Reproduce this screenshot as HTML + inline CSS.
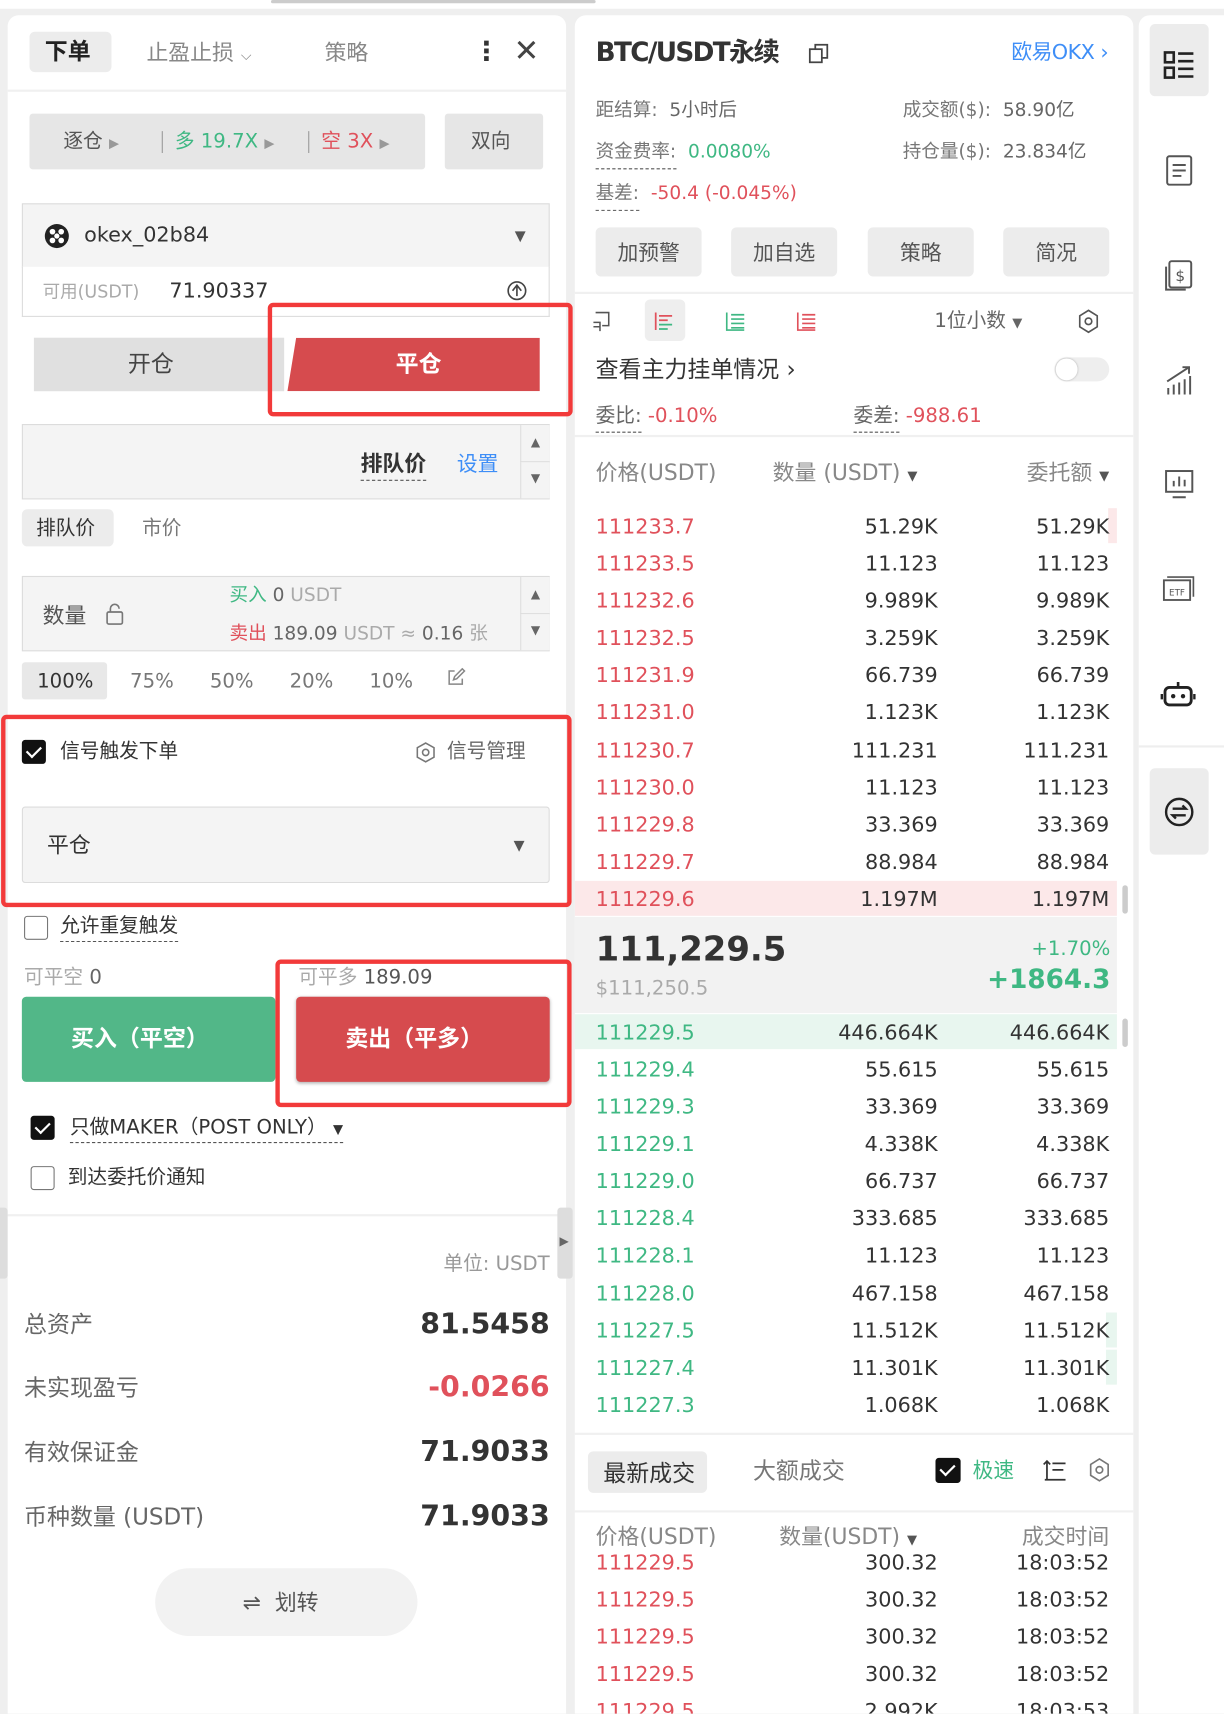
<!DOCTYPE html>
<html><head><meta charset="utf-8">
<style>
*{margin:0;padding:0;box-sizing:border-box}
html,body{width:1224px;height:1714px;overflow:hidden;background:#efefef}
body{font-family:"DejaVu Sans","Noto Sans CJK SC",sans-serif;color:#333}
#w{position:absolute;left:0;top:0;width:1120px;height:1568px;transform:scale(1.09286);transform-origin:0 0}
.a{position:absolute}
.t{position:absolute;white-space:nowrap;line-height:1}
.r{text-align:right}
.g{color:#999}.red{color:#e0515b}.grn{color:#3fb883}
.box{position:absolute;background:#f4f4f4;border:1px solid #dcdcdc}
.hl{position:absolute;border:4px solid #f23a3a;border-radius:5px}
.cb{position:absolute;width:22px;height:22px;border:1.5px solid #777;border-radius:3px;background:#fff}
.cb.on{background:#111;border-color:#111}
.cb.on::after{content:"";position:absolute;left:6px;top:2px;width:6px;height:11px;border:solid #fff;border-width:0 2px 2px 0;transform:rotate(45deg)}
.dot{border-bottom:1.5px dashed #555;padding-bottom:3px}
.btn{position:absolute;background:#ececec;border-radius:5px;display:flex;align-items:center;justify-content:center;font-size:19px;color:#555}
.row{position:absolute;left:545px;width:470px;height:34px;font-size:19px}
.row span{position:absolute;top:8px;line-height:1}
.row .p{left:0}.row .q{right:157px}.row .v{right:0}
.sp{position:absolute;width:27px;background:#f4f4f4;border-left:1px solid #ddd;color:#666;font-size:11px;text-align:center}
</style></head><body>
<div id="w">
<div class="a" style="left:0;top:0;width:1120px;height:8px;background:#fff"></div>
<div class="a" style="left:248px;top:0;width:297px;height:3px;background:#ccc;border-radius:2px"></div>

<!-- LEFT PANEL -->
<div class="a" style="left:7px;top:14px;width:511px;height:1554px;background:#fff;border-radius:10px 10px 0 0"></div>
<div class="a" style="left:27px;top:29px;width:75px;height:37px;background:#ececec;border-radius:5px"></div>
<div class="t" style="left:41px;top:37px;font-size:21px;font-weight:bold;color:#222">下单</div>
<div class="t g" style="left:134px;top:38px;font-size:20px;color:#888">止盈止损 <span style="font-size:13px">⌵</span></div>
<div class="t" style="left:297px;top:38px;font-size:20px;color:#888">策略</div>
<div class="t" style="left:433px;top:35px;font-size:24px;font-weight:bold">⋮</div>
<div class="t" style="left:470px;top:33px;font-size:28px;color:#444">✕</div>
<div class="a" style="left:7px;top:82px;width:511px;height:2px;background:#f0f0f0"></div>

<div class="a" style="left:27px;top:104px;width:362px;height:51px;background:#e6e6e6;border-radius:3px"></div>
<div class="t" style="left:58px;top:121px;font-size:18px;color:#555">逐仓 <span style="font-size:12px;color:#999">▶</span></div>
<div class="a" style="left:148px;top:120px;width:1px;height:20px;background:#999"></div>
<div class="t grn" style="left:160px;top:121px;font-size:18px">多 19.7X <span style="font-size:12px;color:#999">▶</span></div>
<div class="a" style="left:282px;top:120px;width:1px;height:20px;background:#999"></div>
<div class="t red" style="left:294px;top:121px;font-size:18px">空 3X <span style="font-size:12px;color:#999">▶</span></div>
<div class="a" style="left:407px;top:104px;width:90px;height:51px;background:#e6e6e6;border-radius:3px"></div>
<div class="t" style="left:431px;top:121px;font-size:18px;color:#555">双向</div>

<div class="box" style="left:20px;top:186px;width:483px;height:59px"></div>
<svg class="a" style="left:40px;top:204px" width="24" height="24" viewBox="0 0 24 24"><circle cx="12" cy="12" r="11" fill="#222"/><circle cx="8" cy="8" r="2.6" fill="#fff"/><circle cx="16" cy="8" r="2.6" fill="#fff"/><circle cx="8" cy="16" r="2.6" fill="#fff"/><circle cx="16" cy="16" r="2.6" fill="#fff"/><circle cx="12" cy="12" r="2.4" fill="#fff"/></svg>
<div class="t" style="left:77px;top:206px;font-size:19px">okex_02b84</div>
<div class="t" style="left:471px;top:210px;font-size:13px;color:#555">▼</div>
<div class="a" style="left:20px;top:244px;width:483px;height:46px;border:1px solid #dcdcdc;border-top:none;background:#fff"></div>
<div class="t g" style="left:39px;top:259px;font-size:16px;color:#aaa">可用(USDT)</div>
<div class="t" style="left:155px;top:257px;font-size:19px">71.90337</div>
<svg class="a" style="left:463px;top:256px" width="20" height="20" viewBox="0 0 20 20"><circle cx="10" cy="10" r="8" fill="none" stroke="#444" stroke-width="1.5"/><path d="M10 5v10M6 10l4-5 4 5" fill="none" stroke="#444" stroke-width="1.5"/></svg>

<div class="a" style="left:31px;top:309px;width:229px;height:49px;background:#e0e0e0"></div>
<div class="t" style="left:117px;top:323px;font-size:21px;color:#444">开仓</div>
<div class="a" style="left:263px;top:309px;width:231px;height:49px;background:#d64b4e;clip-path:polygon(8px 0,100% 0,100% 100%,0 100%)"></div>
<div class="t" style="left:362px;top:323px;font-size:21px;color:#fff;font-weight:bold">平仓</div>
<div class="hl" style="left:245px;top:277px;width:279px;height:104px"></div>

<div class="box" style="left:20px;top:388px;width:483px;height:69px"></div>
<div class="t" style="left:330px;top:414px;font-size:20px;font-weight:bold"><span class="dot">排队价</span></div>
<div class="t" style="left:418px;top:416px;font-size:19px;color:#3e8ef7">设置</div>
<div class="sp" style="left:476px;top:389px;height:34px;line-height:32px;border-bottom:1px solid #ddd">▲</div>
<div class="sp" style="left:476px;top:423px;height:33px;line-height:30px">▼</div>

<div class="a" style="left:20px;top:466px;width:84px;height:34px;background:#ececec;border-radius:5px"></div>
<div class="t" style="left:33px;top:475px;font-size:18px">排队价</div>
<div class="t" style="left:130px;top:475px;font-size:18px;color:#777">市价</div>

<div class="box" style="left:20px;top:527px;width:483px;height:69px"></div>
<div class="t" style="left:39px;top:553px;font-size:20px;color:#555">数量</div>
<svg class="a" style="left:95px;top:551px" width="20" height="22" viewBox="0 0 20 22"><rect x="3" y="9" width="14" height="11" rx="1.5" fill="none" stroke="#777" stroke-width="1.5"/><path d="M6 9V6a4 4 0 0 1 8 0" fill="none" stroke="#777" stroke-width="1.5"/></svg>
<div class="t" style="left:210px;top:537px;font-size:17px;color:#aaa"><span class="grn">买入</span> <span style="color:#666">0</span> USDT</div>
<div class="t" style="left:210px;top:572px;font-size:17px;color:#aaa"><span class="red">卖出</span> <span style="color:#666">189.09</span> USDT ≈ <span style="color:#666">0.16</span> 张</div>
<div class="sp" style="left:476px;top:528px;height:34px;line-height:32px;border-bottom:1px solid #ddd">▲</div>
<div class="sp" style="left:476px;top:562px;height:33px;line-height:30px">▼</div>

<div class="a" style="left:20px;top:606px;width:78px;height:34px;background:#e8e8e8;border-radius:3px"></div>
<div class="t" style="left:34px;top:615px;font-size:18px">100%</div>
<div class="t" style="left:119px;top:615px;font-size:18px;color:#777">75%</div>
<div class="t" style="left:192px;top:615px;font-size:18px;color:#777">50%</div>
<div class="t" style="left:265px;top:615px;font-size:18px;color:#777">20%</div>
<div class="t" style="left:338px;top:615px;font-size:18px;color:#777">10%</div>
<svg class="a" style="left:408px;top:611px" width="18" height="18" viewBox="0 0 18 18"><path d="M8 3H3v12h12v-5M7 11l1-3 7-7 2 2-7 7z" fill="none" stroke="#888" stroke-width="1.4"/></svg>

<div class="cb on" style="left:20px;top:677px"></div>
<div class="t" style="left:55px;top:679px;font-size:18px">信号触发下单</div>
<svg class="a" style="left:379px;top:678px" width="21" height="21" viewBox="0 0 22 22"><path d="M11 2l8 4.5v9L11 20l-8-4.5v-9z" fill="none" stroke="#777" stroke-width="1.5"/><circle cx="11" cy="11" r="3" fill="none" stroke="#777" stroke-width="1.5"/></svg>
<div class="t" style="left:409px;top:679px;font-size:18px;color:#666">信号管理</div>
<div class="box" style="left:20px;top:738px;width:483px;height:70px;border-radius:3px"></div>
<div class="t" style="left:43px;top:763px;font-size:20px">平仓</div>
<div class="t" style="left:470px;top:768px;font-size:13px;color:#555">▼</div>
<div class="hl" style="left:1px;top:654px;width:522px;height:176px"></div>

<div class="cb" style="left:22px;top:838px"></div>
<div class="t" style="left:55px;top:839px;font-size:18px"><span class="dot">允许重复触发</span></div>
<div class="t" style="left:22px;top:886px;font-size:18px;color:#aaa">可平空 <span style="color:#666">0</span></div>
<div class="t" style="left:273px;top:886px;font-size:18px;color:#aaa">可平多 <span style="color:#555">189.09</span></div>
<div class="a" style="left:20px;top:912px;width:232px;height:78px;background:#52b788;border-radius:4px"></div>
<div class="t" style="left:65px;top:940px;font-size:21px;color:#fff;font-weight:bold">买入（平空）</div>
<div class="a" style="left:271px;top:912px;width:232px;height:78px;background:#d64b4e;border-radius:4px;box-shadow:0 1px 3px rgba(0,0,0,.3)"></div>
<div class="t" style="left:316px;top:940px;font-size:21px;color:#fff;font-weight:bold">卖出（平多）</div>
<div class="hl" style="left:252px;top:878px;width:271px;height:135px"></div>

<div class="cb on" style="left:28px;top:1021px"></div>
<div class="t" style="left:64px;top:1023px;font-size:18px"><span class="dot">只做MAKER（POST ONLY） <span style="font-size:12px">▼</span></span></div>
<div class="cb" style="left:28px;top:1067px"></div>
<div class="t" style="left:62px;top:1069px;font-size:18px">到达委托价通知</div>
<div class="a" style="left:7px;top:1111px;width:511px;height:2px;background:#f0f0f0"></div>
<div class="a" style="left:0;top:1105px;width:7px;height:65px;background:#ddd;border-radius:0 3px 3px 0"></div>
<div class="a" style="left:510px;top:1105px;width:14px;height:65px;background:#ddd;border-radius:3px"></div>
<div class="t" style="left:512px;top:1130px;font-size:11px;color:#666">▶</div>

<div class="t r" style="right:617px;top:1148px;font-size:18px;color:#999">单位: USDT</div>
<div class="t" style="left:22px;top:1202px;font-size:21px;color:#666">总资产</div>
<div class="t" style="right:617px;top:1199px;font-size:26px;font-weight:bold">81.5458</div>
<div class="t" style="left:22px;top:1260px;font-size:21px;color:#666">未实现盈亏</div>
<div class="t red" style="right:617px;top:1257px;font-size:26px;font-weight:bold">-0.0266</div>
<div class="t" style="left:22px;top:1319px;font-size:21px;color:#666">有效保证金</div>
<div class="t" style="right:617px;top:1316px;font-size:26px;font-weight:bold">71.9033</div>
<div class="t" style="left:22px;top:1378px;font-size:21px;color:#666">币种数量 (USDT)</div>
<div class="t" style="right:617px;top:1375px;font-size:26px;font-weight:bold">71.9033</div>
<div class="a" style="left:142px;top:1435px;width:240px;height:62px;background:#f2f2f2;border-radius:31px"></div>
<div class="t" style="left:222px;top:1456px;font-size:20px;color:#555">⇌ &nbsp;划转</div>

<!-- MIDDLE PANEL -->
<div class="a" style="left:526px;top:14px;width:511px;height:1554px;background:#fff;border-radius:10px 10px 0 0"></div>
<div class="t" style="left:545px;top:36px;font-size:24px;font-weight:bold;color:#333;letter-spacing:-1.5px">BTC/USDT永续</div>
<svg class="a" style="left:738px;top:38px" width="22" height="22" viewBox="0 0 22 22"><rect x="3" y="7" width="11" height="12" fill="none" stroke="#444" stroke-width="1.6"/><path d="M8 7V3h11v12h-5" fill="none" stroke="#444" stroke-width="1.6"/></svg>
<div class="t" style="right:106px;top:39px;font-size:19px;color:#3e8ef7;letter-spacing:-0.5px">欧易OKX ›</div>
<div class="t" style="left:545px;top:93px;font-size:17px;color:#777">距结算: <span style="color:#666">&nbsp;5小时后</span></div>
<div class="t" style="left:826px;top:93px;font-size:17px;color:#777">成交额($): <span style="color:#666">&nbsp;58.90亿</span></div>
<div class="t" style="left:545px;top:131px;font-size:17px;color:#777"><span style="border-bottom:1.5px dashed #555;padding-bottom:5px">资金费率:</span> <span class="grn">&nbsp;0.0080%</span></div>
<div class="t" style="left:826px;top:131px;font-size:17px;color:#777">持仓量($): <span style="color:#666">&nbsp;23.834亿</span></div>
<div class="t" style="left:545px;top:169px;font-size:17px;color:#777"><span style="border-bottom:1.5px dashed #555;padding-bottom:5px">基差:</span> <span class="red">&nbsp;-50.4 (-0.045%)</span></div>
<div class="btn" style="left:545px;top:208px;width:97px;height:45px">加预警</div>
<div class="btn" style="left:669px;top:208px;width:97px;height:45px">加自选</div>
<div class="btn" style="left:794px;top:208px;width:97px;height:45px">策略</div>
<div class="btn" style="left:918px;top:208px;width:97px;height:45px">简况</div>
<div class="a" style="left:526px;top:267px;width:511px;height:2px;background:#f0f0f0"></div>

<svg class="a" style="left:540px;top:283px" width="22" height="22" viewBox="0 0 22 22"><path d="M5 3h12v12H11M3 12h6v8M3 16h6" fill="none" stroke="#555" stroke-width="1.4"/></svg>
<div class="a" style="left:590px;top:274px;width:37px;height:38px;background:#eee;border-radius:5px"></div>
<svg class="a" style="left:597px;top:283px" width="22" height="22" viewBox="0 0 22 22"><path d="M3 3v16M6 6h12M6 10h8" fill="none" stroke="#e0515b" stroke-width="1.6"/><path d="M6 14h12M6 18h8" stroke="#3fb883" stroke-width="1.6"/></svg>
<svg class="a" style="left:662px;top:283px" width="22" height="22" viewBox="0 0 22 22"><path d="M3 3v16h16M7 5h12M7 9h12M7 13h12M7 17h12" fill="none" stroke="#3fb883" stroke-width="1.5"/></svg>
<svg class="a" style="left:727px;top:283px" width="22" height="22" viewBox="0 0 22 22"><path d="M3 3v16h16M7 5h12M7 9h12M7 13h12M7 17h12" fill="none" stroke="#e0515b" stroke-width="1.5"/></svg>
<div class="t" style="left:855px;top:285px;font-size:18px;color:#666">1位小数 <span style="font-size:12px">▼</span></div>
<svg class="a" style="left:985px;top:282px" width="22" height="24" viewBox="0 0 22 24"><path d="M11 2l8 5v10l-8 5-8-5V7z" fill="none" stroke="#555" stroke-width="1.5"/><circle cx="11" cy="12" r="3" fill="none" stroke="#555" stroke-width="1.5"/></svg>
<div class="t" style="left:545px;top:328px;font-size:21px;color:#333">查看主力挂单情况 ›</div>
<div class="a" style="left:965px;top:327px;width:50px;height:22px;background:#eee;border-radius:11px"></div>
<div class="a" style="left:966px;top:328px;width:20px;height:20px;background:#fff;border-radius:10px;box-shadow:0 0 2px #aaa"></div>
<div class="t" style="left:545px;top:372px;font-size:18px;color:#666"><span style="border-bottom:1.5px dashed #555;padding-bottom:4px">委比:</span> <span class="red">-0.10%</span></div>
<div class="t" style="left:781px;top:372px;font-size:18px;color:#666"><span style="border-bottom:1.5px dashed #555;padding-bottom:4px">委差:</span> <span class="red">-988.61</span></div>
<div class="a" style="left:526px;top:398px;width:511px;height:2px;background:#f0f0f0"></div>
<div class="t" style="left:545px;top:422px;font-size:20px;color:#888">价格(USDT)</div>
<div class="t" style="left:707px;top:422px;font-size:20px;color:#888">数量 (USDT) <span style="font-size:12px;color:#555">▼</span></div>
<div class="t" style="right:105px;top:422px;font-size:20px;color:#888">委托额 <span style="font-size:12px;color:#555">▼</span></div>

<!-- asks -->
<div class="a" style="left:1014px;top:465px;width:8px;height:32px;background:#fce8e9"></div>
<div class="row" style="top:465px"><span class="p red">111233.7</span><span class="q">51.29K</span><span class="v">51.29K</span></div>
<div class="row" style="top:499px"><span class="p red">111233.5</span><span class="q">11.123</span><span class="v">11.123</span></div>
<div class="row" style="top:533px"><span class="p red">111232.6</span><span class="q">9.989K</span><span class="v">9.989K</span></div>
<div class="row" style="top:567px"><span class="p red">111232.5</span><span class="q">3.259K</span><span class="v">3.259K</span></div>
<div class="row" style="top:601px"><span class="p red">111231.9</span><span class="q">66.739</span><span class="v">66.739</span></div>
<div class="row" style="top:635px"><span class="p red">111231.0</span><span class="q">1.123K</span><span class="v">1.123K</span></div>
<div class="row" style="top:670px"><span class="p red">111230.7</span><span class="q">111.231</span><span class="v">111.231</span></div>
<div class="row" style="top:704px"><span class="p red">111230.0</span><span class="q">11.123</span><span class="v">11.123</span></div>
<div class="row" style="top:738px"><span class="p red">111229.8</span><span class="q">33.369</span><span class="v">33.369</span></div>
<div class="row" style="top:772px"><span class="p red">111229.7</span><span class="q">88.984</span><span class="v">88.984</span></div>
<div class="a" style="left:526px;top:806px;width:496px;height:32px;background:#fce8e9"></div>
<div class="row" style="top:806px"><span class="p red">111229.6</span><span class="q">1.197M</span><span class="v">1.197M</span></div>
<div class="a" style="left:1027px;top:810px;width:5px;height:26px;background:#ccc;border-radius:3px"></div>

<div class="a" style="left:526px;top:839px;width:496px;height:88px;background:#f2f2f2"></div>
<div class="t" style="left:545px;top:854px;font-size:31px;font-weight:bold;color:#333">111,229.5</div>
<div class="t" style="left:545px;top:896px;font-size:18px;color:#aaa">$111,250.5</div>
<div class="t grn" style="right:104px;top:860px;font-size:18px">+1.70%</div>
<div class="t grn" style="right:104px;top:884px;font-size:24px;font-weight:bold">+1864.3</div>

<!-- bids -->
<div class="a" style="left:526px;top:928px;width:496px;height:32px;background:#e8f6ef"></div>
<div class="a" style="left:1027px;top:932px;width:5px;height:26px;background:#ccc;border-radius:3px"></div>
<div class="row" style="top:928px"><span class="p grn">111229.5</span><span class="q">446.664K</span><span class="v">446.664K</span></div>
<div class="row" style="top:962px"><span class="p grn">111229.4</span><span class="q">55.615</span><span class="v">55.615</span></div>
<div class="row" style="top:996px"><span class="p grn">111229.3</span><span class="q">33.369</span><span class="v">33.369</span></div>
<div class="row" style="top:1030px"><span class="p grn">111229.1</span><span class="q">4.338K</span><span class="v">4.338K</span></div>
<div class="row" style="top:1064px"><span class="p grn">111229.0</span><span class="q">66.737</span><span class="v">66.737</span></div>
<div class="row" style="top:1098px"><span class="p grn">111228.4</span><span class="q">333.685</span><span class="v">333.685</span></div>
<div class="row" style="top:1132px"><span class="p grn">111228.1</span><span class="q">11.123</span><span class="v">11.123</span></div>
<div class="row" style="top:1167px"><span class="p grn">111228.0</span><span class="q">467.158</span><span class="v">467.158</span></div>
<div class="a" style="left:1012px;top:1201px;width:10px;height:32px;background:#e8f6ef"></div>
<div class="a" style="left:1012px;top:1235px;width:10px;height:32px;background:#e8f6ef"></div>
<div class="row" style="top:1201px"><span class="p grn">111227.5</span><span class="q">11.512K</span><span class="v">11.512K</span></div>
<div class="row" style="top:1235px"><span class="p grn">111227.4</span><span class="q">11.301K</span><span class="v">11.301K</span></div>
<div class="row" style="top:1269px"><span class="p grn">111227.3</span><span class="q">1.068K</span><span class="v">1.068K</span></div>
<div class="a" style="left:526px;top:1311px;width:511px;height:2px;background:#f0f0f0"></div>

<div class="a" style="left:538px;top:1328px;width:109px;height:38px;background:#ececec;border-radius:5px"></div>
<div class="t" style="left:552px;top:1338px;font-size:21px;color:#333">最新成交</div>
<div class="t" style="left:689px;top:1336px;font-size:21px;color:#777">大额成交</div>
<div class="cb on" style="left:856px;top:1334px;width:23px;height:23px"></div>
<div class="t grn" style="left:890px;top:1337px;font-size:19px">极速</div>
<svg class="a" style="left:953px;top:1334px" width="24" height="22" viewBox="0 0 24 22"><path d="M5 20V3M2 6l3-3 3 3M10 5h12M10 11h10M3 20h19" fill="none" stroke="#333" stroke-width="1.6"/></svg>
<svg class="a" style="left:995px;top:1333px" width="22" height="24" viewBox="0 0 22 24"><path d="M11 2l8 5v10l-8 5-8-5V7z" fill="none" stroke="#777" stroke-width="1.5"/><circle cx="11" cy="12" r="3" fill="none" stroke="#777" stroke-width="1.5"/></svg>
<div class="a" style="left:526px;top:1382px;width:511px;height:2px;background:#f0f0f0"></div>
<div class="t" style="left:545px;top:1396px;font-size:20px;color:#888">价格(USDT)</div>
<div class="t" style="left:713px;top:1396px;font-size:20px;color:#888">数量(USDT) <span style="font-size:12px;color:#555">▼</span></div>
<div class="t" style="right:105px;top:1396px;font-size:20px;color:#888">成交时间</div>
<div class="a" style="left:526px;top:1422px;width:511px;height:146px;overflow:hidden">
<div class="row" style="left:19px;top:-9px"><span class="p red">111229.5</span><span class="q">300.32</span><span class="v">18:03:52</span></div>
<div class="row" style="left:19px;top:25px"><span class="p red">111229.5</span><span class="q">300.32</span><span class="v">18:03:52</span></div>
<div class="row" style="left:19px;top:59px"><span class="p red">111229.5</span><span class="q">300.32</span><span class="v">18:03:52</span></div>
<div class="row" style="left:19px;top:93px"><span class="p red">111229.5</span><span class="q">300.32</span><span class="v">18:03:52</span></div>
<div class="row" style="left:19px;top:127px"><span class="p red">111229.5</span><span class="q">2.992K</span><span class="v">18:03:53</span></div>
</div>

<!-- RIGHT SIDEBAR -->
<div class="a" style="left:1042px;top:14px;width:78px;height:1554px;background:#fff;border-radius:10px 0 0 0"></div>
<div class="a" style="left:1052px;top:22px;width:54px;height:66px;background:#ececec;border-radius:5px"></div>
<svg class="a" style="left:1064px;top:45px" width="30" height="30" viewBox="0 0 30 30"><rect x="2" y="3" width="8" height="9" fill="none" stroke="#222" stroke-width="2.4"/><rect x="2" y="17" width="8" height="9" fill="none" stroke="#222" stroke-width="2.4"/><path d="M14 4h14M14 11h14M14 18h14M14 25h14" stroke="#222" stroke-width="2.4"/></svg>
<svg class="a" style="left:1064px;top:140px" width="30" height="32" viewBox="0 0 30 32"><rect x="4" y="3" width="22" height="26" rx="2" fill="none" stroke="#555" stroke-width="1.8"/><path d="M9 11h12M9 16h12M9 21h8" stroke="#555" stroke-width="1.8"/></svg>
<svg class="a" style="left:1064px;top:236px" width="30" height="32" viewBox="0 0 30 32"><rect x="6" y="3" width="20" height="24" rx="2" fill="none" stroke="#555" stroke-width="1.8"/><path d="M3 8v21h18" fill="none" stroke="#555" stroke-width="1.8"/><text x="16" y="21" font-size="14" text-anchor="middle" fill="#555" font-family="DejaVu Sans">$</text></svg>
<svg class="a" style="left:1064px;top:332px" width="30" height="32" viewBox="0 0 30 32"><path d="M5 29v-6M10 29v-9M15 29v-11M20 29v-14M25 29v-17M4 17L24 4M18 4h6v6" fill="none" stroke="#555" stroke-width="1.8"/></svg>
<svg class="a" style="left:1064px;top:427px" width="30" height="32" viewBox="0 0 30 32"><rect x="3" y="4" width="24" height="19" fill="none" stroke="#555" stroke-width="1.8"/><path d="M10 18v-5M15 18v-9M20 18v-6M9 28h12" stroke="#555" stroke-width="1.8"/></svg>
<svg class="a" style="left:1062px;top:522px" width="32" height="32" viewBox="0 0 32 32"><rect x="3" y="9" width="24" height="18" fill="none" stroke="#555" stroke-width="1.7"/><path d="M6 6h24v18" fill="none" stroke="#555" stroke-width="1.5"/><text x="15" y="23" font-size="8" text-anchor="middle" fill="#555" font-family="DejaVu Sans">ETF</text></svg>
<svg class="a" style="left:1062px;top:620px" width="32" height="30" viewBox="0 0 32 30"><rect x="4" y="9" width="24" height="16" rx="4" fill="none" stroke="#222" stroke-width="2.6"/><circle cx="11.5" cy="17" r="2" fill="#222"/><circle cx="20.5" cy="17" r="2" fill="#222"/><path d="M16 9V4M1 15v5M31 15v5" stroke="#222" stroke-width="2.4"/></svg>
<div class="a" style="left:1042px;top:682px;width:78px;height:2px;background:#eee"></div>
<div class="a" style="left:1052px;top:703px;width:54px;height:79px;background:#ececec;border-radius:5px"></div>
<svg class="a" style="left:1065px;top:729px" width="28" height="28" viewBox="0 0 28 28"><circle cx="14" cy="14" r="12" fill="none" stroke="#222" stroke-width="2.2"/><path d="M8 11h12l-3-3M20 17H8l3 3" fill="none" stroke="#222" stroke-width="2.2"/></svg>
</div>
</body></html>
